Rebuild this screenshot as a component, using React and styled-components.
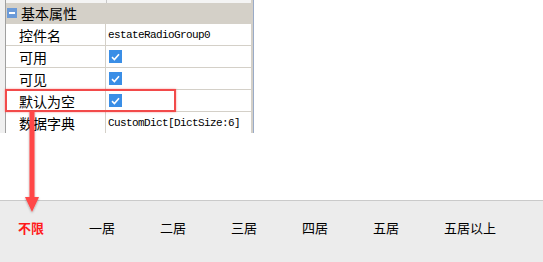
import React from "react";
import styled, { createGlobalStyle } from "styled-components";

const GlobalStyle = createGlobalStyle`
  html, body {
    margin: 0;
    padding: 0;
    background: #ffffff;
  }
  body {
    font-family: "Noto Sans CJK SC", "Noto Sans", sans-serif;
  }
`;

const Page = styled.div`
  position: relative;
  width: 543px;
  height: 262px;
  overflow: hidden;
  display: flex;
  flex-direction: column;
`;

const TopArea = styled.div`
  height: 200px;
  background: #ffffff;
`;

const Panel = styled.div`
  width: 253px;
  height: 133px;
  display: flex;
  background: #f0f0f0;
`;

const Gutter = styled.div`
  width: 5px;
  border-right: 1px solid #a0a0a0;
`;

const Grid = styled.div`
  flex: 1;
  display: flex;
  flex-direction: column;
  border-right: 2px solid #d4d0c8;
  box-shadow: 1px 0 0 #9aabc8;
`;

const TopStrip = styled.div`
  height: 3px;
  display: flex;
  background: #f4f4f4;
`;

const StripCell = styled.div`
  width: ${p => p.width || "auto"};
  flex: ${p => (p.width ? "none" : 1)};
  border-right: ${p => (p.divider ? "1px solid #c8c8c8" : "none")};
`;

const Header = styled.div`
  height: 20px;
  display: flex;
  align-items: center;
  background: #d4d0c8;
  font-size: 14px;
  color: #000;
`;

const Toggle = styled.span`
  width: 10px;
  height: 10px;
  margin: 0 4px 0 1px;
  background: #6b9ad8;
  display: flex;
  align-items: center;
  justify-content: center;

  &::after {
    content: "";
    width: 6px;
    height: 2px;
    background: #ffffff;
  }
`;

const Row = styled.div`
  height: 21px;
  display: flex;
  border-top: 1px solid #d4d0c8;
  background: #ffffff;
`;

const Label = styled.div`
  width: 86px;
  padding-left: 13px;
  display: flex;
  align-items: center;
  border-right: 1px solid #d4d0c8;
  font-size: 14px;
  color: #000;
`;

const Value = styled.div`
  flex: 1;
  padding-left: 2px;
  display: flex;
  align-items: center;
  font-family: "Liberation Mono", monospace;
  font-size: 11px;
  letter-spacing: -0.6px;
  color: #000;
  white-space: nowrap;
  overflow: hidden;
`;

const Check = styled.span`
  width: 13px;
  height: 13px;
  margin-left: 1px;
  background: #3a8ee6;
  display: flex;
  align-items: center;
  justify-content: center;
`;

const Bar = styled.div`
  flex: 1;
  display: flex;
  align-items: center;
  padding: 0 0 8px 18px;
  background: #ececec;
  border-top: 1px solid #cacaca;
`;

const Tab = styled.div`
  width: 71px;
  flex: none;
  font-size: 13px;
  font-weight: ${p => (p.active ? 700 : 400)};
  color: ${p => (p.active ? "#ff1a1a" : "#000")};
`;

const Highlight = styled.div`
  position: absolute;
  left: 5px;
  top: 89px;
  width: 167px;
  height: 19px;
  border: 2px solid #f24a4a;
  box-shadow: 0 0 2px rgba(240, 60, 60, 0.5);
`;

const Arrow = styled.svg`
  position: absolute;
  left: 22px;
  top: 111px;
  overflow: visible;
`;

function CheckBox() {
    return (
        <Check>
            <svg width="9" height="8" viewBox="0 0 9 8">
                <path d="M1 4.2 L3.4 6.5 L8 1.2" fill="none" stroke="#fff" strokeWidth="1.6" />
            </svg>
        </Check>
    );
}

const rows = [
    { label: "控件名", value: "estateRadioGroup0" },
    { label: "可用", check: true },
    { label: "可见", check: true },
    { label: "默认为空", check: true },
    { label: "数据字典", value: "CustomDict[DictSize:6]" }
];

const tabs = ["不限", "一居", "二居", "三居", "四居", "五居", "五居以上"];

export default function App() {
    return (
        <Page>
            <GlobalStyle />
            <TopArea>
                <Panel>
                    <Gutter />
                    <Grid>
                        <TopStrip>
                            <StripCell width="100px" divider />
                            <StripCell />
                        </TopStrip>
                        <Header>
                            <Toggle />
                            基本属性
                        </Header>
                        {rows.map(r => (
                            <Row key={r.label}>
                                <Label>{r.label}</Label>
                                <Value>{r.check ? <CheckBox /> : r.value}</Value>
                            </Row>
                        ))}
                    </Grid>
                </Panel>
            </TopArea>
            <Bar>
                {tabs.map((t, i) => (
                    <Tab key={t} active={i === 0}>
                        {t}
                    </Tab>
                ))}
            </Bar>
            <Highlight />
            <Arrow width="20" height="105" viewBox="0 0 20 105">
                <defs>
                    <filter id="sh" x="-50%" y="-10%" width="200%" height="130%">
                        <feDropShadow dx="0" dy="1" stdDeviation="1.2" floodColor="#000" floodOpacity="0.35" />
                    </filter>
                </defs>
                <g filter="url(#sh)">
                    <rect x="7.5" y="0" width="5" height="88" fill="#ff4646" />
                    <polygon points="3,86 17,86 10,101" fill="#ff4646" />
                </g>
            </Arrow>
        </Page>
    );
}
